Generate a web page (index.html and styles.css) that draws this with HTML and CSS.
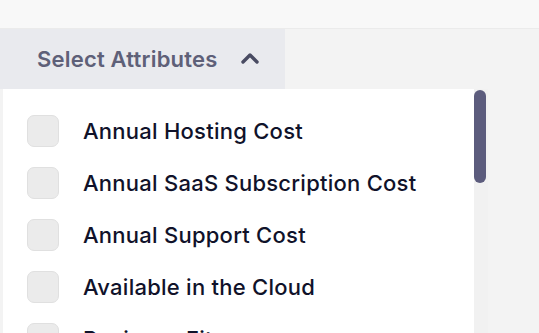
FILE: index.html
```
<!DOCTYPE html>
<html lang="en">
<head>
  <meta charset="UTF-8">
  <meta name="viewport" content="width=device-width, initial-scale=1.0">
  <title>Select Attributes</title>
  <link rel="stylesheet" href="styles.css">
</head>
<body>

  <!-- top strip -->
  <div class="top-bar"></div>

  <!-- filter header -->
  <div class="filter-bar">
    <button class="select-btn">
      <span>Select Attributes</span>
      <svg class="chevron" width="18" height="12" viewBox="0 0 18 12">
        <path d="M2 10 L9 3 L16 10" fill="none" stroke="currentColor" stroke-width="3.4" stroke-linecap="round" stroke-linejoin="round"/>
      </svg>
    </button>
  </div>

  <!-- dropdown list -->
  <div class="dropdown">
    <ul class="attr-list">
      <li><span class="check"></span>Annual Hosting Cost</li>
      <li><span class="check"></span>Annual SaaS Subscription Cost</li>
      <li><span class="check"></span>Annual Support Cost</li>
      <li><span class="check"></span>Available in the Cloud</li>
      <li><span class="check"></span>Business Fit</li>
    </ul>
    <div class="scroll-track">
      <div class="scroll-thumb"></div>
    </div>
  </div>

</body>
</html>
```
FILE: styles.css
```
* {
  margin: 0;
  padding: 0;
  box-sizing: border-box;
}

body {
  font-family: Inter, "Liberation Sans", sans-serif;
  background-color: #f3f3f3;
  overflow: hidden;
  height: 333px;
}

/* top strip */
.top-bar {
  height: 29px;
  background: #f8f8f8;
  border-bottom: 1px solid #ebebeb;
}

/* filter header */
.filter-bar {
  height: 60px;
  display: flex;
  background: #f3f3f3;
}

.select-btn {
  width: 285px;
  height: 100%;
  display: flex;
  align-items: center;
  gap: 24px;
  padding-left: 37px;
  border: none;
  background: #e9eaee;
  font-family: Inter, "Liberation Sans", sans-serif;
  font-size: 22px;
  font-weight: 600;
  letter-spacing: 0.2px;
  color: #5e6078;
  cursor: pointer;
}

.chevron {
  color: #494b62;
  margin-top: -2px;
}

/* dropdown */
.dropdown {
  display: flex;
  margin-left: 3px;
  width: 485px;
  height: 244px;
  overflow: hidden;
}

.attr-list {
  flex: 1;
  list-style: none;
  background: #fff;
  padding-top: 16px;
  padding-left: 24px;
}

.attr-list li {
  display: flex;
  align-items: center;
  gap: 24px;
  height: 52px;
  font-size: 22px;
  font-weight: 500;
  letter-spacing: 0.25px;
  color: #10122a;
  white-space: nowrap;
}

.check {
  width: 32px;
  height: 32px;
  border-radius: 7px;
  background: #ebebeb;
  border: 1px solid #e0e0e0;
  flex-shrink: 0;
}

.scroll-track {
  width: 14px;
  background: #f1f1f1;
  padding-top: 1px;
}

.scroll-thumb {
  width: 12px;
  height: 93px;
  border-radius: 6px;
  background: #5c5c7d;
}
```
